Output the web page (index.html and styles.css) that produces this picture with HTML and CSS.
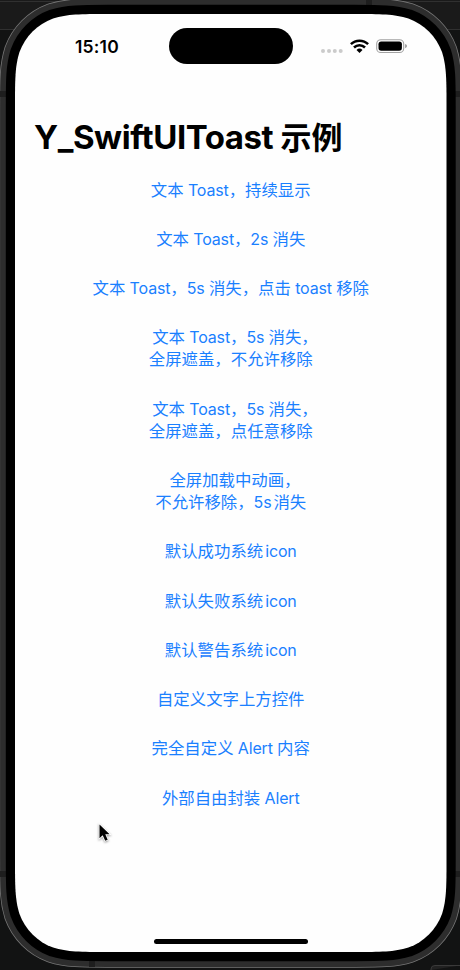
FILE: index.html
```html
<!DOCTYPE html>
<html lang="zh-CN">
<head>
<meta charset="utf-8">
<title>Y_SwiftUIToast 示例</title>
<link rel="stylesheet" href="styles.css">
</head>
<body>
<svg class="bezel" viewBox="0 0 460 970" aria-hidden="true">
  <defs>
    <path id="shape" d="M107.3 14H354.2C380.8 14 394 14 408.4 18.5C424 24.2 436.3 36.5 442 52.1C446.5 66.5 446.5 79.7 446.5 106.3V859.7C446.5 886.3 446.5 899.5 442 913.9C436.3 929.5 424 941.8 408.4 947.5C394 952 380.8 952 354.2 952H107.3C80.7 952 67.5 952 53.1 947.5C37.5 941.8 25.2 929.5 19.5 913.9C15 899.5 15 886.3 15 859.7V106.3C15 79.7 15 66.5 19.5 52.1C25.2 36.5 37.5 24.2 53.1 18.5C67.5 14 80.7 14 107.3 14Z"/>
  </defs>
  <rect width="460" height="970" fill="#121313"/>
  <path d="M0 0H460V29H0Z" fill="#1a1a1a"/>
  <path d="M0 1.5H460M0 29.5H460" stroke="#303030"/>
  <path d="M431 970V969Q431 965.5 435 965.5H460" fill="#222" stroke="#3a3a3a"/>
  <use href="#shape" fill="none" stroke="#777" stroke-width="31.4"/>
  <use href="#shape" fill="none" stroke="#2d2d2d" stroke-width="29.8"/>
  <path d="M0 91H6V97H0ZM454 91H460V97H454ZM0 871H6V877H0ZM454 871H460V877H454ZM366 0H372V6H366ZM89 961H95V967H89Z" fill="#1e1e1e"/>
  <use href="#shape" fill="#fefefe" stroke="#000" stroke-width="18.4" paint-order="stroke"/>
</svg>
<div class="screen">
  <header class="status">
    <time class="clock">15:10</time>
    <div class="island"></div>
    <svg class="indicators" viewBox="0 0 90 20" aria-hidden="true">
      <g fill="#cbcbcb"><circle cx="3" cy="15" r="2"/><circle cx="9" cy="15" r="2"/><circle cx="14.8" cy="15" r="2"/><circle cx="20.7" cy="15" r="2"/></g>
      <g fill="none" stroke="#000" stroke-width="2.5"><path d="M30.9 8.2A12.2 12.2 0 0 1 48.1 8.2"/><path d="M34 11.5A7.8 7.8 0 0 1 45 11.5"/></g>
      <path d="M36.5 13.9A4.3 4.3 0 0 1 42.5 13.9L39.5 17Z"/>
      <rect x="56.7" y="3.7" width="27" height="12.8" rx="4.1" fill="none" stroke="#a3a3a3" stroke-width="1.1"/>
      <rect x="58.5" y="5.5" width="23.4" height="9.3" rx="2.7"/>
      <path d="M85.1 8Q87 8.6 87 10.1T85.1 12.2Z" fill="#999"/>
    </svg>
  </header>
  <h1 class="title">Y_SwiftUIToast <span class="zh">示例</span></h1>
  <main class="list">
    <a class="row">文本 <span class="en">Toast</span>，持续显示</a>
    <a class="row">文本 <span class="en">Toast</span>，<span class="en">2s</span> 消失</a>
    <a class="row">文本 <span class="en">Toast</span>，<span class="en">5s</span> 消失，点击 <span class="en">toast</span> 移除</a>
    <a class="row">文本 <span class="en">Toast</span>，<span class="en">5s</span> 消失<span class="end">，</span><br>全屏遮盖，不允许移除</a>
    <a class="row">文本 <span class="en">Toast</span>，<span class="en">5s</span> 消失<span class="end">，</span><br>全屏遮盖，点任意移除</a>
    <a class="row">全屏加载中动画<span class="end">，</span><br>不允许移除，<span class="en">5s</span><span class="thin"></span>消失</a>
    <a class="row">默认成功系统<span class="thin"></span><span class="en">icon</span></a>
    <a class="row">默认失败系统<span class="thin"></span><span class="en">icon</span></a>
    <a class="row">默认警告系统<span class="thin"></span><span class="en">icon</span></a>
    <a class="row">自定义文字上方控件</a>
    <a class="row">完全自定义 <span class="en">Alert</span> 内容</a>
    <a class="row">外部自由封装 <span class="en">Alert</span></a>
  </main>
  <div class="home"></div>
</div>
<svg class="cursor" viewBox="0 0 14 20" aria-hidden="true"><path d="M1.5 1.5V15.2L4.7 12.3L7.2 17.8L9.7 16.7L7.3 11.3H11.6Z" stroke="#fff" stroke-width="1.6" paint-order="stroke"/></svg>
</body>
</html>
```

FILE: styles.css
```css
* { box-sizing: border-box; }
body {
  margin: 0;
  width: 460px;
  height: 970px;
  overflow: hidden;
  position: relative;
  background: #121313;
  font-family: Inter, "Noto Sans CJK SC", sans-serif;
}
.bezel {
  position: absolute;
  inset: 0;
  width: 460px;
  height: 970px;
}
.screen {
  position: relative;
  display: flex;
  flex-direction: column;
  width: 431.5px;
  height: 938px;
  margin: 14px 0 0 15px;
}
.status {
  display: flex;
  height: 64px;
  padding-top: 14px;
}
.clock {
  width: 154px;
  padding-left: 60px;
  font-size: 17.5px;
  font-weight: 600;
  line-height: 37px;
  letter-spacing: 0.2px;
}
.island {
  width: 124px;
  height: 36px;
  border-radius: 18px;
  background: #000;
}
.indicators {
  width: 90px;
  height: 20px;
  margin: 8px 0 0 27px;
}
.title {
  height: 44px;
  margin: 37px 0 0 19px;
  font-size: 33px;
  font-weight: 700;
  line-height: 44px;
  letter-spacing: -0.45px;
  white-space: nowrap;
}
.zh {
  font-size: 31px;
  letter-spacing: 0;
}
.list {
  display: flex;
  flex-direction: column;
  gap: 27.35px;
  margin-top: 19.6px;
  text-align: center;
}
.row {
  color: #1a80ff;
  font-family: "Noto Sans CJK SC", sans-serif;
  font-size: 16.4px;
  line-height: 21.95px;
  word-spacing: 0.6px;
  white-space: nowrap;
}
.en {
  font-family: Inter, sans-serif;
  font-size: 16px;
  letter-spacing: -0.15px;
  line-height: 1;
}
.end {
  display: inline-block;
  width: 8px;
  line-height: 1;
}
.thin {
  display: inline-block;
  width: 2px;
}
.home {
  width: 154px;
  height: 5px;
  margin: auto auto 8px 139px;
  border-radius: 3px;
  background: #000;
}
.cursor {
  position: absolute;
  left: 98px;
  top: 823px;
  width: 14px;
  height: 20px;
  filter: drop-shadow(0 1px 1px rgba(0, 0, 0, 0.4));
}
```
